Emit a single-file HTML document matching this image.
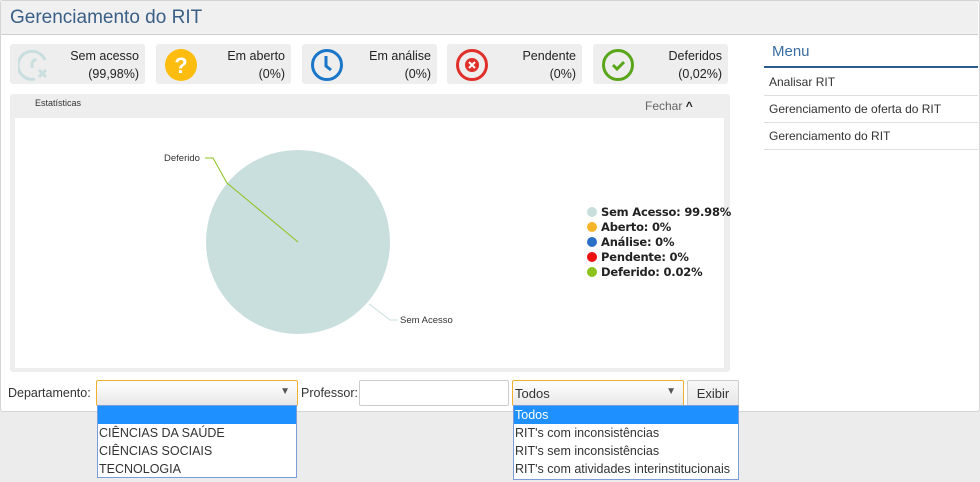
<!DOCTYPE html>
<html><head><meta charset="utf-8"><style>
*{box-sizing:border-box;margin:0;padding:0}
body{width:980px;height:482px;background:#ececec;font-family:"Segoe UI","Liberation Sans",sans-serif;font-size:12px;color:#333;position:relative;overflow:hidden}
.abs{position:absolute}
#main{left:0;top:0;width:980px;height:412px;background:#fff;border:1px solid #d4d4d4;border-radius:3px}
#hdr{left:1px;top:1px;width:977px;height:34px;background:#f0f0f0;border-bottom:1px solid #d0d0d0}
#hdr span{position:absolute;left:9px;top:6px;font-size:19px;color:#3a5f86}
.box{top:44px;width:135px;height:40px;background:#eee;border-radius:3px}
.box .t{position:absolute;right:6px;top:3px;text-align:right;font-size:12.5px;line-height:18px;color:#222}
.box svg{position:absolute;left:8px;top:4px}
#stats{left:10px;top:94px;width:720px;height:278px;background:#eee;border-radius:3px}
#inner{left:15px;top:118px;width:709px;height:250px;background:#fff}
.lg{font-family:"DejaVu Sans",sans-serif;font-size:11.5px;font-weight:bold;color:#222;left:587px;letter-spacing:-0.2px}
.dot{display:inline-block;width:10px;height:10px;border-radius:50%;margin-right:4px;vertical-align:-1px}
.menu{left:764px;width:214px;height:27px;border-bottom:1px solid #ddd;font-size:12px;padding:6px 5px;color:#333}
.sel{height:26px;border:1px solid #f0b030;background:linear-gradient(#fff,#e8e8e8);border-radius:2px;font-size:13px}
.list{background:#fff;border:1px solid #7a9cd8;font-size:12.5px;line-height:18px}
.list div{padding-left:1px;height:18px}
.list .s{background:#1e90ff;color:#fff}
</style></head><body>
<div id="main" class="abs"></div>
<div id="hdr" class="abs"><span>Gerenciamento do RIT</span></div>

<div class="box abs" style="left:10px"><svg width="34" height="34" viewBox="0 0 34 34"><path d="M27 12A14 14 0 1 0 17 31" fill="none" stroke="#c9dede" stroke-width="3"/><path d="M14 14v6M14 14l4-3" stroke="#c9dede" stroke-width="3" fill="none"/><path d="M21 22l7 7M28 22l-7 7" stroke="#c9dede" stroke-width="3"/></svg><div class="t">Sem acesso<br>(99,98%)</div></div>
<div class="box abs" style="left:156px"><svg width="34" height="34" viewBox="0 0 34 34"><circle cx="17" cy="17" r="16" fill="#fdbd10"/><text x="17" y="25" text-anchor="middle" font-family="Liberation Sans" font-weight="bold" font-size="22" fill="#fff">?</text></svg><div class="t">Em aberto<br>(0%)</div></div>
<div class="box abs" style="left:302px"><svg width="34" height="34" viewBox="0 0 34 34"><circle cx="17" cy="17" r="14.5" fill="none" stroke="#1a76c8" stroke-width="3"/><path d="M16 8v10l5 4" fill="none" stroke="#1a76c8" stroke-width="3"/></svg><div class="t">Em análise<br>(0%)</div></div>
<div class="box abs" style="left:447px"><svg width="34" height="34" viewBox="0 0 34 34"><circle cx="17" cy="17" r="14.5" fill="none" stroke="#e0302a" stroke-width="3"/><circle cx="17" cy="17" r="7" fill="#e0302a"/><path d="M14 14l6 6M20 14l-6 6" stroke="#fff" stroke-width="2"/></svg><div class="t">Pendente<br>(0%)</div></div>
<div class="box abs" style="left:593px"><svg width="34" height="34" viewBox="0 0 34 34"><circle cx="17" cy="17" r="14.5" fill="none" stroke="#5aa61a" stroke-width="3"/><path d="M12 17l4 4 7-7" fill="none" stroke="#5aa61a" stroke-width="3"/></svg><div class="t">Deferidos<br>(0,02%)</div></div>

<div id="stats" class="abs"></div>
<div class="abs" style="left:35px;top:98px;font-size:9px;color:#333">Estatísticas</div>
<div class="abs" style="left:645px;top:99px;font-size:12px;color:#666">Fechar <b style="color:#222">^</b></div>
<div id="inner" class="abs"></div>
<svg class="abs" style="left:0;top:0" width="740" height="372">
<circle cx="298" cy="242" r="92" fill="#c8dfdd"/>
<path d="M298 242L227 183L213 158H205" fill="none" stroke="#8cc21a" stroke-width="1"/>
<path d="M369 304L390 320H398" fill="none" stroke="#c8dfdd" stroke-width="1"/>
<text x="164" y="161" font-family="Liberation Sans" font-size="9.5" fill="#333">Deferido</text>
<text x="400" y="323" font-family="Liberation Sans" font-size="9.5" fill="#333">Sem Acesso</text>
</svg>
<div class="abs lg" style="top:205px;line-height:15px">
<div><span class="dot" style="background:#c8dfdd"></span>Sem Acesso: 99.98%</div>
<div><span class="dot" style="background:#f6b42a"></span>Aberto: 0%</div>
<div><span class="dot" style="background:#2a6fc8"></span>Análise: 0%</div>
<div><span class="dot" style="background:#ee1111"></span>Pendente: 0%</div>
<div><span class="dot" style="background:#8cc21a"></span>Deferido: 0.02%</div>
</div>

<div class="abs" style="left:764px;top:36px;width:214px;height:32px;border-bottom:2px solid #2c5a8a;padding:7px 8px;font-size:15px;color:#3a6ea0">Menu</div>
<div class="menu abs" style="top:69px">Analisar RIT</div>
<div class="menu abs" style="top:96px">Gerenciamento de oferta do RIT</div>
<div class="menu abs" style="top:123px">Gerenciamento do RIT</div>

<div class="abs" style="left:8px;top:386px;font-size:12.5px">Departamento:</div>
<div class="abs sel" style="left:96px;top:380px;width:202px"><span style="position:absolute;right:7px;top:5px;font-size:10px;color:#555">▼</span></div>
<div class="abs" style="left:301px;top:386px;font-size:12.5px">Professor:</div>
<div class="abs" style="left:359px;top:380px;width:150px;height:26px;border:1px solid #ccc;border-radius:2px;background:#fff"></div>
<div class="abs sel" style="left:512px;top:380px;width:172px;padding:5px 2px"><span>Todos</span><span style="position:absolute;right:7px;top:5px;font-size:10px;color:#555">▼</span></div>
<div class="abs" style="left:687px;top:380px;width:52px;height:27px;border:1px solid #ccc;border-radius:2px;background:linear-gradient(#f8f8f8,#e6e6e6);text-align:center;padding-top:5px;font-size:13px">Exibir</div>

<div class="abs list" style="left:97px;top:405px;width:200px;height:73px">
<div class="s"></div><div>CIÊNCIAS DA SAÚDE</div><div>CIÊNCIAS SOCIAIS</div><div>TECNOLOGIA</div></div>
<div class="abs list" style="left:513px;top:405px;width:226px;height:75px">
<div class="s">Todos</div><div>RIT's com inconsistências</div><div>RIT's sem inconsistências</div><div>RIT's com atividades interinstitucionais</div></div>
</body></html>
